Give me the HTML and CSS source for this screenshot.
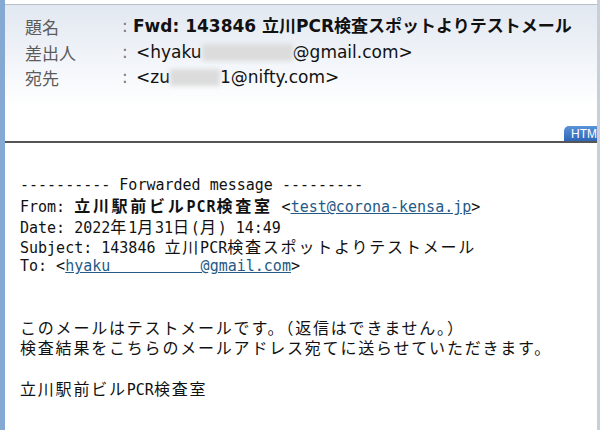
FILE: index.html
```html
<!DOCTYPE html>
<html lang="ja">

<head>
  <meta charset="UTF-8">
  <meta name="viewport" content="width=device-width, initial-scale=1.0">
  <title>Fwd: 143846 立川PCR検査スポットよりテストメール</title>
  <link rel="stylesheet" href="styles.css">
</head>

<body>
  <div class="mail">

    <!-- ヘッダー部分 -->
    <div class="head">
      <div class="row">
        <span class="label">題名</span>
        <span class="colon">:</span>
        <span class="value subject">Fwd: 143846 立川PCR検査スポットよりテストメール</span>
      </div>
      <div class="row">
        <span class="label">差出人</span>
        <span class="colon">:</span>
        <span class="value addr">&lt;hyaku<span class="blur w-from"></span>@gmail.com&gt;</span>
      </div>
      <div class="row">
        <span class="label">宛先</span>
        <span class="colon">:</span>
        <span class="value addr">&lt;zu<span class="blur w-to"></span>1@nifty.com&gt;</span>
      </div>
      <div class="tab">HTM</div>
    </div>

    <!-- 本文 -->
    <div class="body">
<div class="line">---------- Forwarded message ---------</div>
<div class="line">From: <b class="bold"><span class="jp">立川駅前ビル</span>PCR<span class="jp">検査室</span></b> &lt;<a href="#">test@corona-kensa.jp</a>&gt;</div>
<div class="line">Date: 2022<span class="jp">年</span>1<span class="jp">月</span>31<span class="jp">日</span>(<span class="jp">月</span>) 14:49</div>
<div class="line">Subject: 143846 <span class="jp">立川</span>PCR<span class="jp">検査スポットよりテストメール</span></div>
<div class="line">To: &lt;<a href="#">hyaku          @gmail.com</a>&gt;</div>
<div class="line"> </div>
<div class="line"> </div>
<div class="line"><span class="jp">このメールはテストメールです。（返信はできません。）</span></div>
<div class="line"><span class="jp">検査結果をこちらのメールアドレス宛てに送らせていただきます。</span></div>
<div class="line"> </div>
<div class="line"><span class="jp">立川駅前ビル</span>PCR<span class="jp">検査室</span></div>
    </div>

  </div>
</body>

</html>
```

FILE: styles.css
```css
html {
  background-color: #fff;
}

body {
  margin: 0;
}

.mail {
  height: 430px;
  box-sizing: border-box;
  padding-top: 4px;
  border-left: 5px solid #86a9d4;
  border-right: 3px solid #c7cfdb;
  background-color: #fff;
}

.head {
  position: relative;
  height: 139px;
  box-sizing: border-box;
  padding: 9px 0 0 20px;
  border-top: 1px solid #b9c0ca;
  border-bottom: 2px solid #555;
  background: linear-gradient(#e2e8f1, #f3f6fa 45%, #fff 75%);
  font-family: "DejaVu Sans", "Noto Sans CJK JP", sans-serif;
  font-size: 17px;
}

.row {
  display: flex;
  height: 25.5px;
  line-height: 25.5px;
  white-space: nowrap;
}

.label {
  width: 97px;
  color: #5b5b5b;
  font-family: "Noto Sans CJK JP", sans-serif;
}

.colon {
  width: 11px;
  color: #777;
}

.value {
  color: #111;
}

.addr {
  padding-left: 3px;
}

.subject {
  font-weight: bold;
}

.blur {
  display: inline-block;
  height: 17px;
  vertical-align: -3px;
  background-color: #dcdcdc;
  filter: blur(2px);
}

.w-from {
  width: 91px;
}

.w-to {
  width: 50px;
}

.tab {
  position: absolute;
  right: 0;
  bottom: 0;
  width: 26px;
  height: 15px;
  padding-left: 7px;
  border-radius: 5px 0 0 0;
  background: linear-gradient(#5a93d8, #2d66b8);
  color: #fff;
  font-family: "Liberation Sans", sans-serif;
  font-size: 12px;
  line-height: 16px;
  white-space: nowrap;
  overflow: hidden;
}

.body {
  padding: 32px 0 0 15px;
  color: #111;
  font-family: "DejaVu Sans Mono", "Noto Sans CJK JP", monospace;
  font-size: 15px;
}

.line {
  height: 20.3px;
  line-height: 20.3px;
  white-space: pre;
}

.jp {
  font-family: "Noto Sans CJK JP", sans-serif;
  font-size: 16px;
  letter-spacing: 1.8px;
}

.bold {
  letter-spacing: 1px;
}

.bold .jp {
  letter-spacing: 2.7px;
}

a {
  color: #245a86;
}
```
